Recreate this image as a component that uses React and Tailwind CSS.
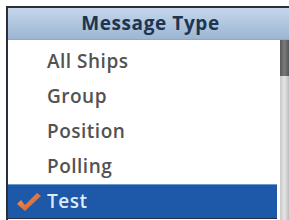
import React from 'react';

const items = ['All Ships', 'Group', 'Position', 'Polling', 'Test'];

function Check() {
  return (
    <svg width="26" height="22" viewBox="0 0 26 22">
      <defs>
        <linearGradient id="chk" x1="0" y1="0" x2="1" y2="1">
          <stop offset="0" stopColor="#f0a060" />
          <stop offset="1" stopColor="#d0502a" />
        </linearGradient>
      </defs>
      <path d="M1 13 L5 9 L9 14 L21 2 L25 5 L9 20 Z" fill="url(#chk)" />
    </svg>
  );
}

export default function App() {
  const selected = 'Test';
  return (
    <div className="w-[289px] h-[220px] bg-white pt-[6px] pl-[6px] overflow-hidden" style={{ fontFamily: '"Open Sans", "DejaVu Sans", sans-serif' }}>
      <div className="flex flex-col h-[214px] border-l-2 border-t-2 border-[#2a3038]">
        {/* Header */}
        <div className="h-[32px] flex items-center justify-center bg-gradient-to-b from-[#c6d6eb] to-[#9cb6d3] border-b border-[#8eaacb]">
          <span className="text-[19px] font-bold text-[#1d3550] tracking-[0.6px] pl-[4px]">Message Type</span>
        </div>
        <div className="flex flex-1">
          <div className="flex-1 flex flex-col pt-[4px]">
            {items.map((item) => (
              item === selected ? (
                <div key={item} className="h-[35px] flex items-center bg-[#1e58a8] border-t border-[#6f9ad0] border-b border-b-[#243040]">
                  <div className="w-[39px] flex justify-center pl-[2px]">
                    <Check />
                  </div>
                  <span className="text-[19px] font-semibold text-[#dfe9f7] tracking-[0.5px]">{item}</span>
                </div>
              ) : (
                <div key={item} className="h-[35px] flex items-center pl-[39px]">
                  <span className="text-[19px] font-semibold text-[#525252] tracking-[0.5px]">{item}</span>
                </div>
              )
            ))}
          </div>
          {/* Scrollbar */}
          <div className="w-[9px] ml-[3px] bg-gradient-to-r from-[#c8c8c8] via-[#e4e4e4] to-[#bcbcbc] flex flex-col">
            <div className="h-[36px] bg-gradient-to-r from-[#5a5a5a] via-[#7a7a7a] to-[#555555]" />
          </div>
        </div>
      </div>
    </div>
  );
}
